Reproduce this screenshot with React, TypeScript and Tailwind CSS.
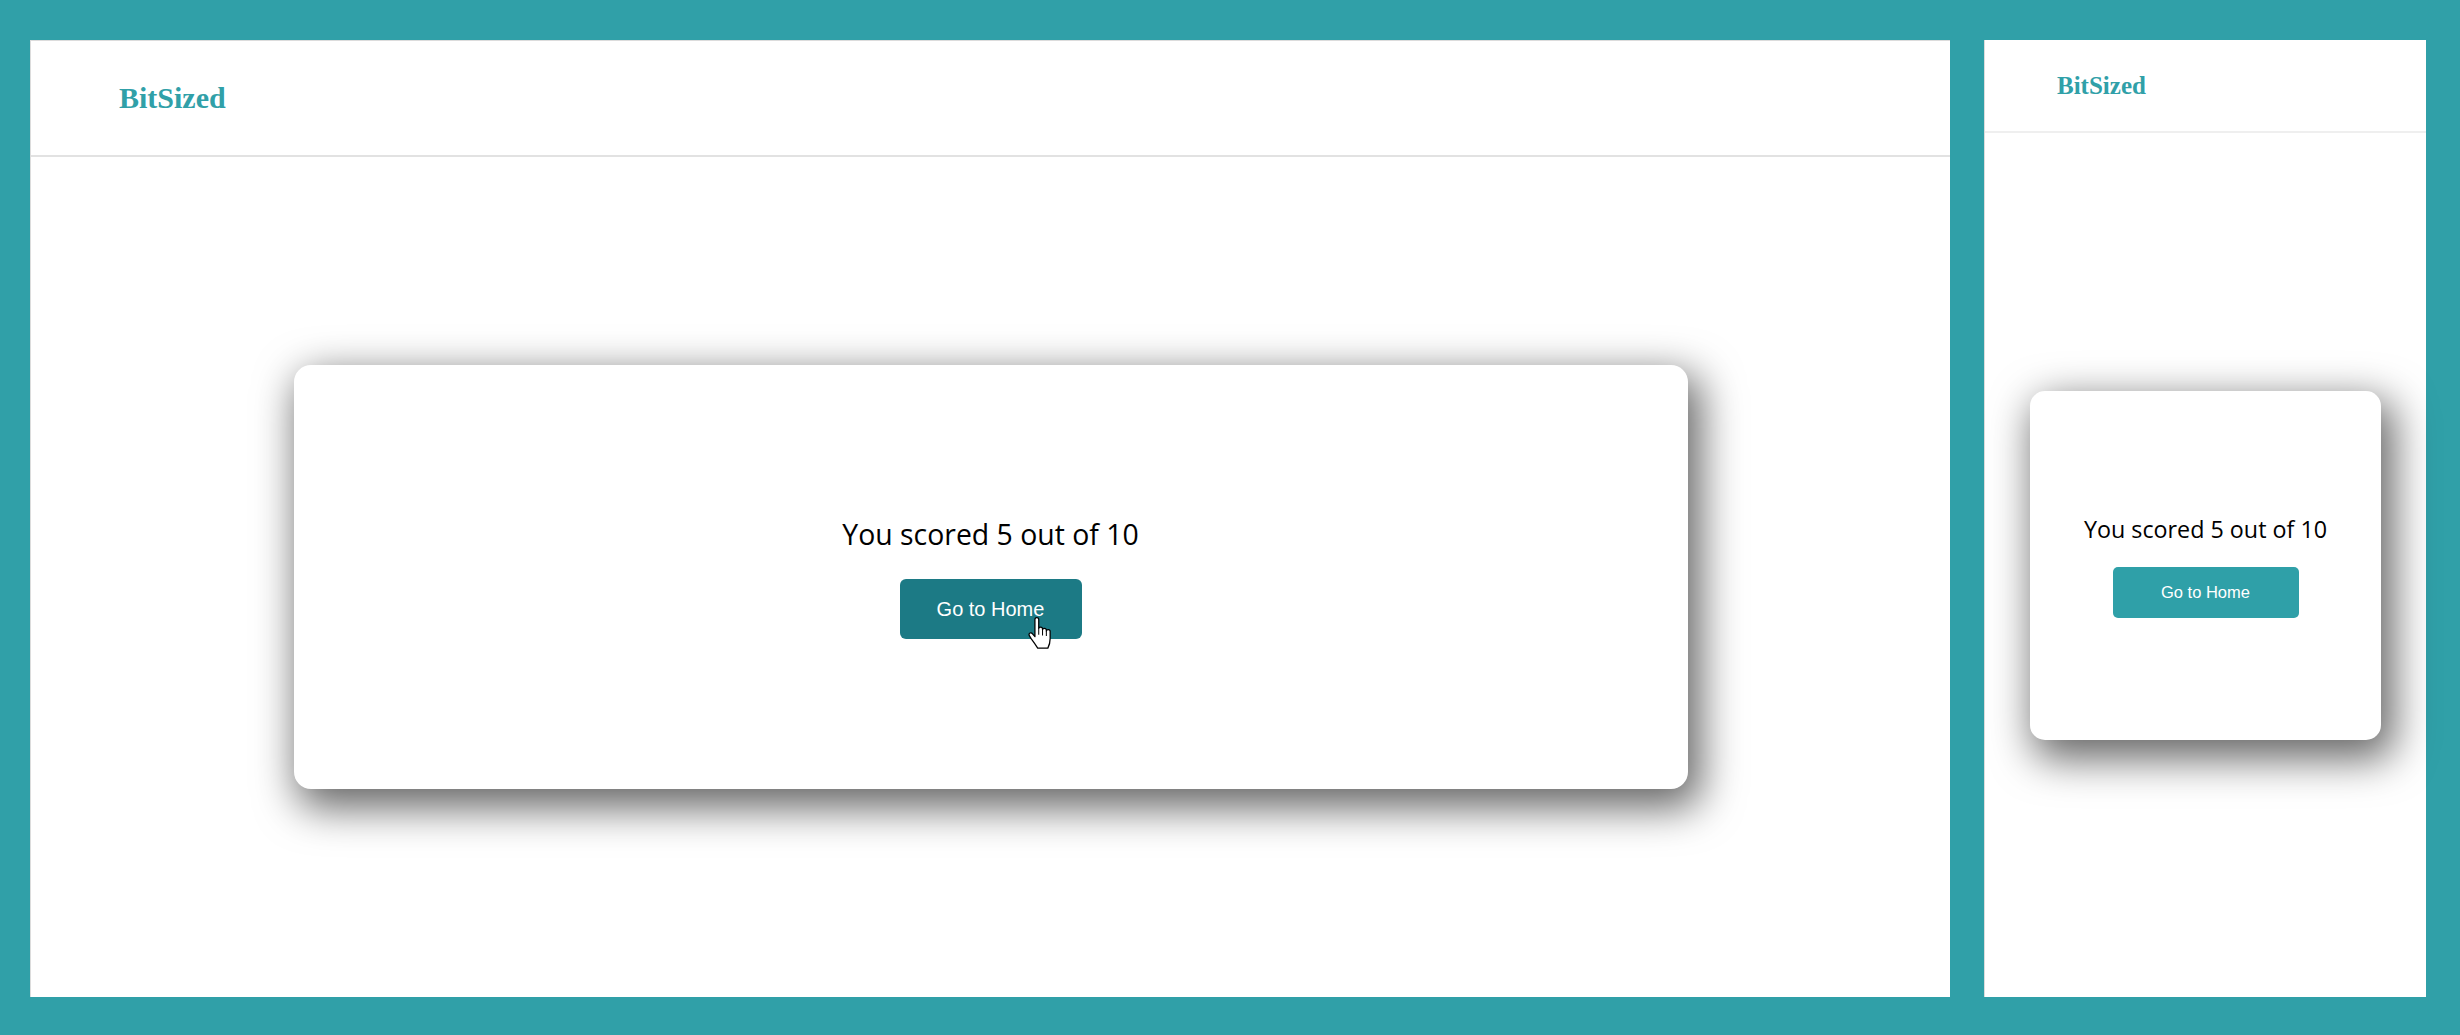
import React from 'react'

const serif = { fontFamily: '"Liberation Serif", "Times New Roman", serif' }
const body = { fontFamily: '"Open Sans", "Noto Sans", sans-serif' }
const arial = { fontFamily: '"Liberation Sans", Arial, sans-serif' }

function HandCursor() {
  return (
    <svg
      className="absolute left-[127px] top-[38px] w-[26px] h-[33px] pointer-events-none"
      viewBox="0 0 20 26"
      fill="none"
    >
      <path
        d="M6 2 Q6 0.5 7.5 0.5 Q9 0.5 9 2 L9 9 Q9 8 10.5 8 Q12 8 12 9.5 L12 10 Q12 9 13.5 9 Q15 9 15 10.5 L15 11 Q15 10 16.5 10 Q18 10 18 11.5 L18 17 Q18 21 16.2 24.5 L8.2 24.5 Q6 21 3 17 L1.5 14.5 Q1 13 2.2 12.6 Q3.4 12.3 4.3 13.5 L6 15.5 Z"
        fill="#fff"
        stroke="#000"
        strokeWidth="1"
        strokeLinejoin="round"
      />
      <path d="M9 9 V14 M12 10 V14.5 M15 11 V15" stroke="#000" strokeWidth="0.8" />
    </svg>
  )
}

function DesktopView() {
  return (
    <div className="w-[1920px] flex flex-col bg-white border-t border-l border-[#dcdcdc]">
      <header className="h-[116px] flex items-center pl-[88px] border-b-2 border-[#e2e2e2]">
        <span className="text-[30px] font-bold text-[#30a0a8] leading-none" style={serif}>
          BitSized
        </span>
      </header>
      <main className="flex-1 flex items-center justify-center">
        <div className="w-[1394px] h-[424px] bg-white rounded-[17px] shadow-[8px_14px_42px_5px_rgba(0,0,0,0.6)] flex flex-col items-center justify-center">
          <p className="text-[28.4px] text-black leading-[38px]" style={body}>
            You scored 5 out of 10
          </p>
          <button
            className="relative mt-[26px] w-[182px] h-[60px] rounded-[6px] bg-[#1c7a85] text-white text-[20px]"
            style={arial}
          >
            Go to Home
            <HandCursor />
          </button>
        </div>
      </main>
    </div>
  )
}

function MobileView() {
  return (
    <div className="w-[442px] flex flex-col bg-white border-l border-[#dcdcdc]">
      <header className="h-[93px] flex items-center pl-[72px] border-b-2 border-[#efefef]">
        <span className="text-[25px] font-bold text-[#30a0a8] leading-none" style={serif}>
          BitSized
        </span>
      </header>
      <main className="flex-1 flex items-center justify-center">
        <div className="w-[351px] h-[349px] bg-white rounded-[15px] shadow-[8px_14px_42px_5px_rgba(0,0,0,0.6)] flex flex-col items-center justify-center">
          <p className="text-[23.3px] text-black leading-[32px]" style={body}>
            You scored 5 out of 10
          </p>
          <button
            className="mt-[22px] w-[186px] h-[51px] rounded-[5px] bg-[#2fa0a8] text-white text-[16.5px]"
            style={arial}
          >
            Go to Home
          </button>
        </div>
      </main>
    </div>
  )
}

export default function App() {
  return (
    <div className="w-[2460px] h-[1035px] bg-[#30a0a8] flex gap-[34px] pt-[40px] pl-[30px] pr-[34px] pb-[38px] overflow-hidden">
      <DesktopView />
      <MobileView />
    </div>
  )
}
